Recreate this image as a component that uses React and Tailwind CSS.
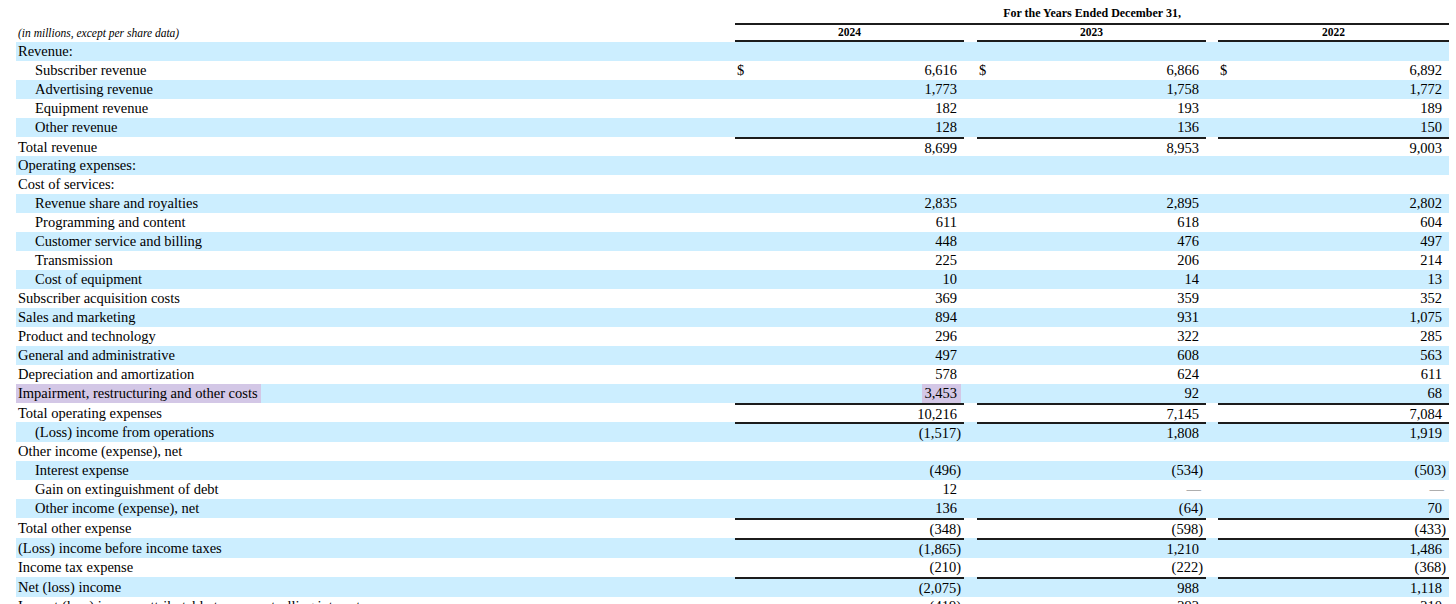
import React from 'react';

const rows = [
    { label: 'Revenue:' },
    { label: 'Subscriber revenue', indent: true, dollar: true, v: ['6,616', '6,866', '6,892'] },
    { label: 'Advertising revenue', indent: true, v: ['1,773', '1,758', '1,772'] },
    { label: 'Equipment revenue', indent: true, v: ['182', '193', '189'] },
    { label: 'Other revenue', indent: true, v: ['128', '136', '150'] },
    { label: 'Total revenue', line: true, v: ['8,699', '8,953', '9,003'] },
    { label: 'Operating expenses:' },
    { label: 'Cost of services:' },
    { label: 'Revenue share and royalties', indent: true, v: ['2,835', '2,895', '2,802'] },
    { label: 'Programming and content', indent: true, v: ['611', '618', '604'] },
    { label: 'Customer service and billing', indent: true, v: ['448', '476', '497'] },
    { label: 'Transmission', indent: true, v: ['225', '206', '214'] },
    { label: 'Cost of equipment', indent: true, v: ['10', '14', '13'] },
    { label: 'Subscriber acquisition costs', v: ['369', '359', '352'] },
    { label: 'Sales and marketing', v: ['894', '931', '1,075'] },
    { label: 'Product and technology', v: ['296', '322', '285'] },
    { label: 'General and administrative', v: ['497', '608', '563'] },
    { label: 'Depreciation and amortization', v: ['578', '624', '611'] },
    { label: 'Impairment, restructuring and other costs', hl: true, v: ['3,453', '92', '68'] },
    { label: 'Total operating expenses', line: true, v: ['10,216', '7,145', '7,084'] },
    { label: '(Loss) income from operations', indent: true, line: true, tall: true, v: ['(1,517)', '1,808', '1,919'] },
    { label: 'Other income (expense), net' },
    { label: 'Interest expense', indent: true, v: ['(496)', '(534)', '(503)'] },
    { label: 'Gain on extinguishment of debt', indent: true, v: ['12', '—', '—'] },
    { label: 'Other income (expense), net', indent: true, v: ['136', '(64)', '70'] },
    { label: 'Total other expense', line: true, tall: true, v: ['(348)', '(598)', '(433)'] },
    { label: '(Loss) income before income taxes', line: true, tall: true, v: ['(1,865)', '1,210', '1,486'] },
    { label: 'Income tax expense', v: ['(210)', '(222)', '(368)'] },
    { label: 'Net (loss) income', line: true, tall: true, v: ['(2,075)', '988', '1,118'] },
    { label: 'Impact (loss) income attributable to noncontrolling interest', v: ['(419)', '292', '210'] },
];

const Num = ({ value, hl }) => {
    if (!value) return <span></span>;
    if (value === '—') return <span className="text-[#707070] -mr-[2px]">—</span>;
    const neg = value.startsWith('(');
    const inner = neg ? (
        <>
            {value.slice(0, -1)}
            <span className="-mr-[4px]">)</span>
        </>
    ) : value;
    return <span className={hl ? 'bg-[#d3c7e6] pl-[2px] -mr-[4px] pr-[4px]' : ''}>{inner}</span>;
};

const Cell = ({ value, dollar, line, hl }) => (
    <div className={`flex items-center justify-between pl-[2px] pr-[7px] ${line ? 'border-t-2 border-[#1c1c1c]' : ''}`}>
        <span>{dollar ? '$' : ''}</span>
        <Num value={value} hl={hl} />
    </div>
);

const App = () => {
    const cols = 'grid grid-cols-[719px_229px_13px_229px_12px_231px]';

    return (
        <div className="h-[604px] w-[1456px] overflow-hidden bg-white text-black font-['Liberation_Serif','Times_New_Roman',serif]">
            <div className="ml-[16px] w-[1433px]">
                <div className={`${cols} h-[25px]`}>
                    <div></div>
                    <div className="col-span-5 flex items-center justify-center border-b-2 border-[#1c1c1c] text-[12px] font-bold pt-[2px]">
                        For the Years Ended December 31,
                    </div>
                </div>
                <div className={`${cols} h-[17px] text-[11.5px] leading-[15px]`}>
                    <div className="pl-[2px] pt-[1px] italic">(in millions, except per share data)</div>
                    <div className="border-b-2 border-[#1c1c1c] text-center font-bold">2024</div>
                    <div></div>
                    <div className="border-b-2 border-[#1c1c1c] text-center font-bold">2023</div>
                    <div></div>
                    <div className="border-b-2 border-[#1c1c1c] text-center font-bold">2022</div>
                </div>

                {rows.map((row, i) => (
                    <div
                        key={i}
                        className={`${cols} ${row.tall ? 'h-[20px]' : 'h-[19px]'} ${i % 2 === 0 ? 'bg-[#cceeff]' : 'bg-white'} text-[14.5px] leading-[19px]`}
                    >
                        <div className={`flex items-center ${row.indent ? 'pl-[19px]' : ''}`}>
                            <span className={row.hl ? 'bg-[#d3c7e6] pl-[2px] pr-[3px]' : row.indent ? '' : 'pl-[2px]'}>
                                {row.label}
                            </span>
                        </div>
                        <Cell value={row.v?.[0]} dollar={row.dollar} line={row.line} hl={row.hl} />
                        <div></div>
                        <Cell value={row.v?.[1]} dollar={row.dollar} line={row.line} />
                        <div></div>
                        <Cell value={row.v?.[2]} dollar={row.dollar} line={row.line} />
                    </div>
                ))}
            </div>
        </div>
    );
};

export default App;
